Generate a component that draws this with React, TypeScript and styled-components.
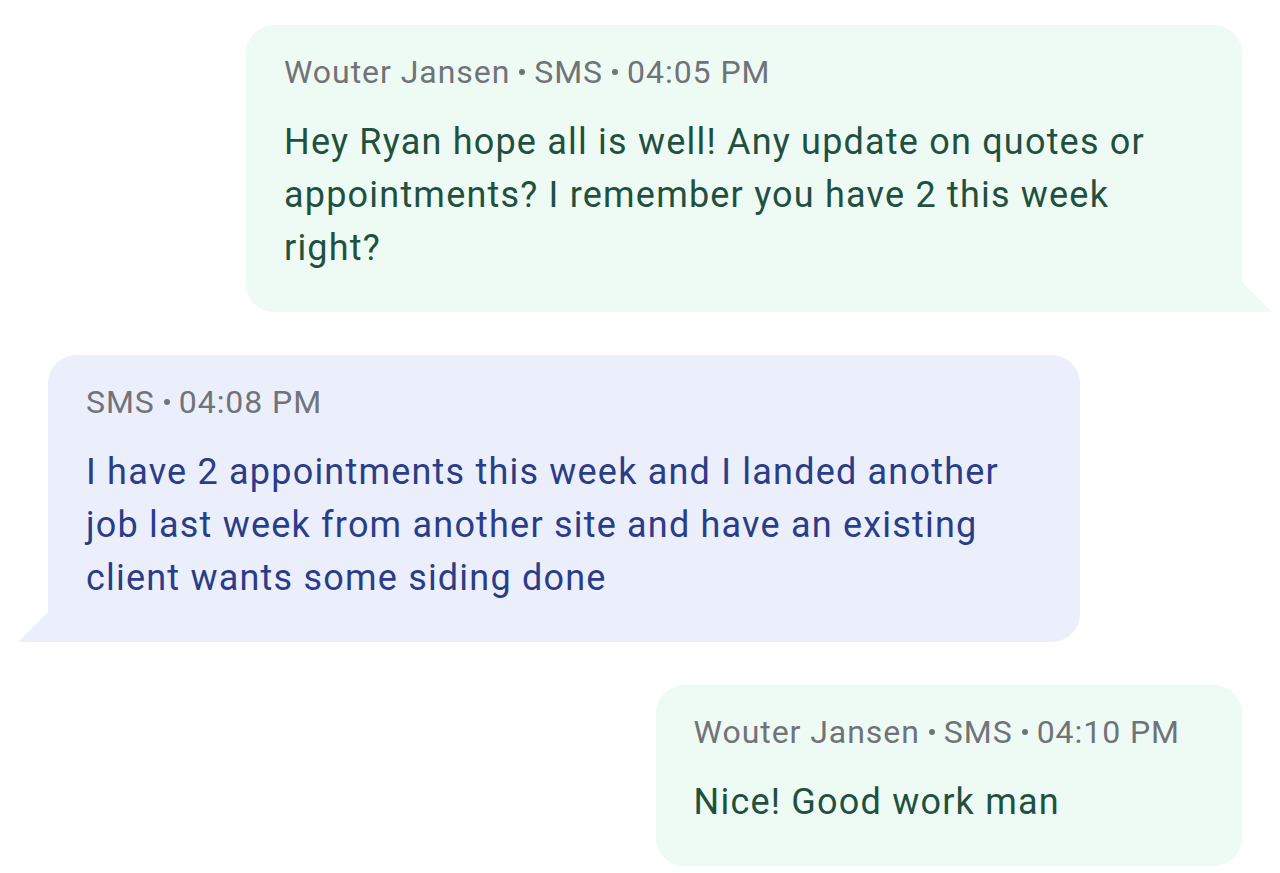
import React from "react";
import styled, { createGlobalStyle } from "styled-components";

const Global = createGlobalStyle`
  html, body { margin: 0; padding: 0; background: #ffffff; }
  body { font-family: Roboto, "Noto Sans", sans-serif; -webkit-font-smoothing: antialiased; }
`;

const Thread = styled.div`
  display: flex;
  flex-direction: column;
  gap: 43px;
  padding: 25px 38px 0 48px;
`;

type Side = "out" | "in";

const Bubble = styled.div<{ $side: Side; $max: number; $tail?: boolean }>`
  position: relative;
  align-self: ${(p) => (p.$side === "out" ? "flex-end" : "flex-start")};
  max-width: ${(p) => p.$max}px;
  box-sizing: border-box;
  padding: 27px 62px 37px 38px;
  border-radius: 28px;
  background: ${(p) => (p.$side === "out" ? "#eefbf4" : "#ebeffb")};
  ${(p) =>
    p.$tail && p.$side === "out"
      ? "border-bottom-right-radius: 0;"
      : p.$tail
      ? "border-bottom-left-radius: 0;"
      : ""}
`;

const Tail = styled.span<{ $side: Side }>`
  position: absolute;
  bottom: 0;
  width: 30px;
  height: 30px;
  background: ${(p) => (p.$side === "out" ? "#eefbf4" : "#ebeffb")};
  ${(p) =>
    p.$side === "out"
      ? "right: -30px; clip-path: polygon(0 0, 100% 100%, 0 100%);"
      : "left: -30px; clip-path: polygon(100% 0, 100% 100%, 0 100%);"}
`;

const Meta = styled.div`
  display: flex;
  align-items: center;
  gap: 9px;
  font-size: 32px;
  line-height: 40px;
  letter-spacing: 0.95px;
  color: #707378;
  white-space: nowrap;
`;

const Dot = styled.span`
  width: 6px;
  height: 6px;
  border-radius: 50%;
  background: #707378;
`;

const Body = styled.div<{ $side: Side }>`
  margin-top: 24px;
  font-size: 36px;
  line-height: 53px;
  letter-spacing: 1.2px;
  color: ${(p) => (p.$side === "out" ? "#22503e" : "#2b3c88")};
`;

const Message = ({
  side,
  max,
  tail,
  meta,
  text,
}: {
  side: Side;
  max: number;
  tail?: boolean;
  meta: string[];
  text: string;
}) => (
  <Bubble $side={side} $max={max} $tail={tail}>
    <Meta>
      {meta.map((m, i) => (
        <React.Fragment key={i}>
          {i > 0 && <Dot />}
          <span>{m}</span>
        </React.Fragment>
      ))}
    </Meta>
    <Body $side={side}>{text}</Body>
    {tail && <Tail $side={side} />}
  </Bubble>
);

export default function App() {
  return (
    <>
      <Global />
      <Thread>
        <Message
          side="out"
          max={996}
          tail
          meta={["Wouter Jansen", "SMS", "04:05 PM"]}
          text="Hey Ryan hope all is well! Any update on quotes or appointments? I remember you have 2 this week right?"
        />
        <Message
          side="in"
          max={1032}
          tail
          meta={["SMS", "04:08 PM"]}
          text="I have 2 appointments this week and I landed another job last week from another site and have an existing client wants some siding done"
        />
        <Message
          side="out"
          max={996}
          meta={["Wouter Jansen", "SMS", "04:10 PM"]}
          text="Nice! Good work man"
        />
      </Thread>
    </>
  );
}
